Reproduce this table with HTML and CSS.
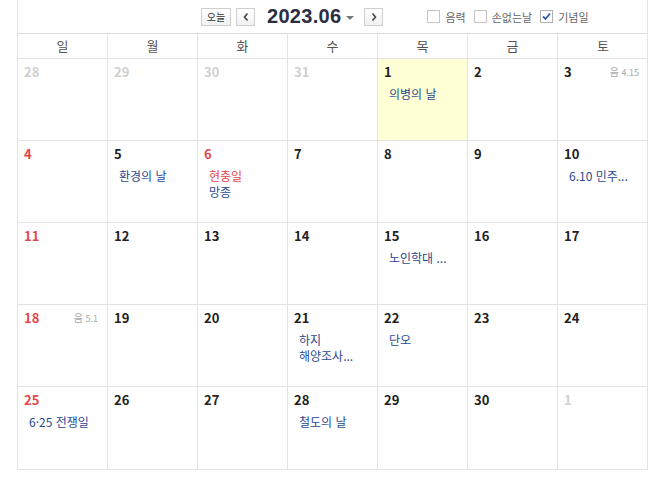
FILE: index.html
```html
<!DOCTYPE html>
<html lang="ko">
<head>
<meta charset="utf-8">
<link rel="stylesheet" href="styles.css">
</head>
<body>
<div class="cal">
  <div class="topbar">
    <div class="nav">
      <button class="btn today">오늘</button>
      <button class="btn arrow"><svg width="8" height="10" viewBox="0 0 8 10"><path d="M5.5 1.5 L2.5 5 L5.5 8.5" fill="none" stroke="#444" stroke-width="1.6"/></svg></button>
      <span class="title">2023.06</span>
      <span class="caret"></span>
      <button class="btn arrow next"><svg width="8" height="10" viewBox="0 0 8 10"><path d="M2.5 1.5 L5.5 5 L2.5 8.5" fill="none" stroke="#444" stroke-width="1.6"/></svg></button>
    </div>
    <div class="opts">
      <label class="opt"><span class="box"></span>음력</label>
      <label class="opt"><span class="box"></span>손없는날</label>
      <label class="opt"><span class="box checked"><svg width="11" height="11" viewBox="0 0 11 11"><path d="M2 5.5 L4.5 8 L9 2.5" fill="none" stroke="#2f5aa8" stroke-width="1.8"/></svg></span>기념일</label>
    </div>
  </div>
  <div class="grid">
    <div class="wd">일</div><div class="wd">월</div><div class="wd">화</div><div class="wd">수</div><div class="wd">목</div><div class="wd">금</div><div class="wd">토</div>

    <div class="cell"><span class="num other">28</span></div>
    <div class="cell"><span class="num other">29</span></div>
    <div class="cell"><span class="num other">30</span></div>
    <div class="cell"><span class="num other">31</span></div>
    <div class="cell today-cell"><span class="num">1</span><div class="ev">의병의 날</div></div>
    <div class="cell"><span class="num">2</span></div>
    <div class="cell"><span class="num">3</span><span class="lunar"><b>음</b> 4.15</span></div>

    <div class="cell"><span class="num sun">4</span></div>
    <div class="cell"><span class="num">5</span><div class="ev">환경의 날</div></div>
    <div class="cell"><span class="num sun">6</span><div class="ev red">현충일</div><div class="ev">망종</div></div>
    <div class="cell"><span class="num">7</span></div>
    <div class="cell"><span class="num">8</span></div>
    <div class="cell"><span class="num">9</span></div>
    <div class="cell"><span class="num">10</span><div class="ev">6.10 민주...</div></div>

    <div class="cell"><span class="num sun">11</span></div>
    <div class="cell"><span class="num">12</span></div>
    <div class="cell"><span class="num">13</span></div>
    <div class="cell"><span class="num">14</span></div>
    <div class="cell"><span class="num">15</span><div class="ev">노인학대 ...</div></div>
    <div class="cell"><span class="num">16</span></div>
    <div class="cell"><span class="num">17</span></div>

    <div class="cell"><span class="num sun">18</span><span class="lunar"><b>음</b> 5.1</span></div>
    <div class="cell"><span class="num">19</span></div>
    <div class="cell"><span class="num">20</span></div>
    <div class="cell"><span class="num">21</span><div class="ev">하지</div><div class="ev">해양조사...</div></div>
    <div class="cell"><span class="num">22</span><div class="ev">단오</div></div>
    <div class="cell"><span class="num">23</span></div>
    <div class="cell"><span class="num">24</span></div>

    <div class="cell"><span class="num sun">25</span><div class="ev">6·25 전쟁일</div></div>
    <div class="cell"><span class="num">26</span></div>
    <div class="cell"><span class="num">27</span></div>
    <div class="cell"><span class="num">28</span><div class="ev">철도의 날</div></div>
    <div class="cell"><span class="num">29</span></div>
    <div class="cell"><span class="num">30</span></div>
    <div class="cell"><span class="num other">1</span></div>
  </div>
</div>
</body>
</html>
```

FILE: styles.css
```css
* { box-sizing: border-box; }
body {
  margin: 0;
  background: #fff;
  font-family: "Noto Sans CJK KR", "Noto Sans", sans-serif;
  color: #222;
}
.cal {
  margin-left: 17px;
  width: 631px;
  border-left: 1px solid #e3e3e3;
  border-right: 1px solid #e3e3e3;
  border-bottom: 1px solid #e3e3e3;
}
.topbar {
  height: 34px;
  display: flex;
  align-items: center;
  border-bottom: 1px solid #dcdcdc;
}
.nav {
  display: flex;
  align-items: center;
  margin-left: 183px;
}
.btn {
  height: 18px;
  border: 1px solid #cfcfcf;
  background: linear-gradient(#fff, #f1f1f1);
  padding: 0;
  display: flex;
  align-items: center;
  justify-content: center;
  font-family: "Noto Sans CJK KR", sans-serif;
  font-size: 10px;
  color: #333;
}
.btn.today { width: 30px; }
.btn.arrow { width: 19px; margin-left: 5px; }
.btn.arrow.next { margin-left: 10px; }
.title {
  font-family: "Liberation Sans", Arial, sans-serif;
  font-weight: bold;
  font-size: 20px;
  color: #2b2d42;
  margin-left: 12px;
  letter-spacing: 0.3px;
}
.caret {
  width: 0; height: 0;
  border-left: 4px solid transparent;
  border-right: 4px solid transparent;
  border-top: 4px solid #777;
  margin-left: 5px;
  margin-top: 2px;
}
.opts {
  display: flex;
  align-items: center;
  margin-left: 44px;
}
.opt {
  display: flex;
  align-items: center;
  font-size: 11px;
  color: #666;
  margin-right: 8px;
}
.box {
  width: 13px; height: 13px;
  border: 1px solid #c6c6c6;
  background: #fff;
  margin-right: 5px;
  display: flex;
  align-items: center;
  justify-content: center;
}
.box.checked { border-color: #b0b0b0; }
.grid {
  display: grid;
  grid-template-columns: repeat(7, 90px);
  grid-auto-rows: 82px;
  grid-template-rows: 25px;
}
.wd {
  height: 25px;
  line-height: 24px;
  text-align: center;
  font-size: 13px;
  color: #555;
  border-bottom: 1px solid #e3e3e3;
  border-right: 1px solid #e3e3e3;
}
.wd:nth-child(7n) { border-right: none; }
.cell {
  position: relative;
  border-bottom: 1px solid #e3e3e3;
  border-right: 1px solid #e3e3e3;
  padding: 4px 6px 0 6px;
}
.cell:nth-child(7n) { border-right: none; }
.cell:nth-last-child(-n+7) { border-bottom: none; }
.today-cell { background: #ffffd6; }
.num {
  display: block;
  font-weight: bold;
  font-size: 13px;
  line-height: 17px;
  color: #222;
}
.num.sun { color: #e5474b; }
.num.other { color: #d0d0d0; }
.lunar {
  position: absolute;
  top: 5px;
  right: 9px;
  font-size: 9px;
  color: #aaa;
}
.lunar b { font-weight: normal; font-size: 10px; }
.ev {
  margin-left: 5px;
  font-size: 12px;
  line-height: 16px;
  color: #2a4a92;
  white-space: nowrap;
}
.num + .ev { margin-top: 6px; }
.ev.red { color: #e5474b; }
```
